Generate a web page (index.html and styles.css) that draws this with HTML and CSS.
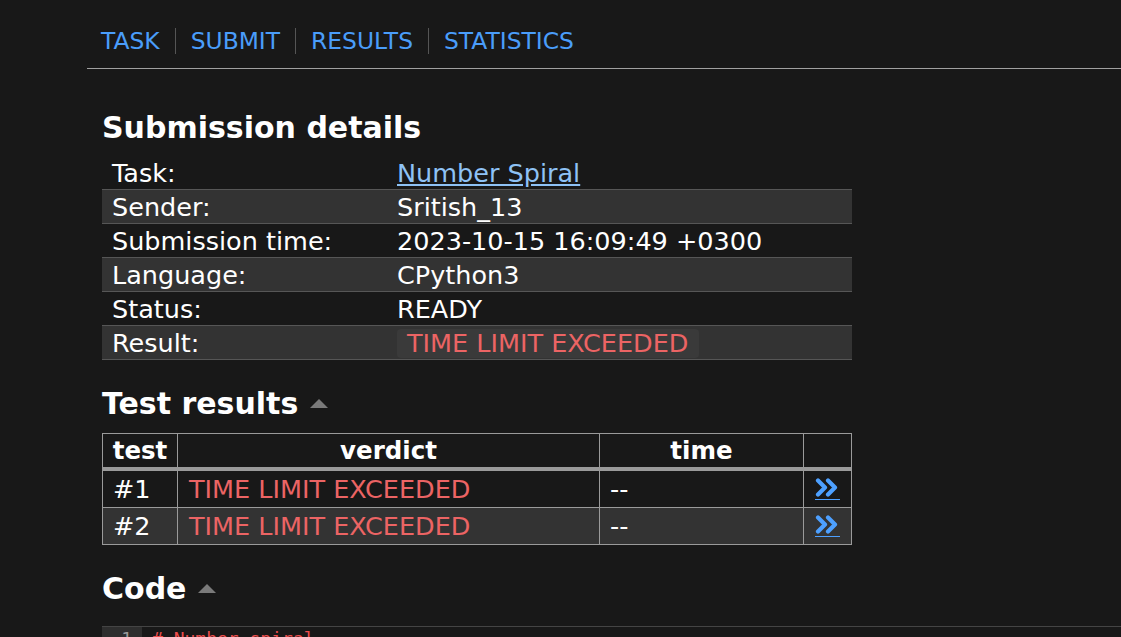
FILE: index.html
```html
<!DOCTYPE html>
<html>
<head>
<meta charset="utf-8">
<link rel="stylesheet" href="styles.css">
</head>
<body>
<div class="page">
  <nav class="nav">
    <a href="#">TASK</a>
    <a href="#">SUBMIT</a>
    <a href="#">RESULTS</a>
    <a href="#">STATISTICS</a>
  </nav>
  <div class="content">
    <h2 class="h-first">Submission details</h2>
    <table class="details">
      <tr><td class="k">Task:</td><td><a class="task-link" href="#">Number Spiral</a></td></tr>
      <tr><td class="k">Sender:</td><td>Sritish_13</td></tr>
      <tr><td class="k">Submission time:</td><td>2023-10-15 16:09:49 +0300</td></tr>
      <tr><td class="k">Language:</td><td>CPython3</td></tr>
      <tr><td class="k">Status:</td><td>READY</td></tr>
      <tr><td class="k">Result:</td><td><span class="badge">TIME LIMIT EXCEEDED</span></td></tr>
    </table>

    <h2 class="h-sec h-tests">Test results <span class="tri"></span></h2>
    <table class="tests">
      <thead>
        <tr><th class="c1">test</th><th class="c2">verdict</th><th class="c3">time</th><th class="c4"></th></tr>
      </thead>
      <tbody>
        <tr><td>#1</td><td class="red">TIME LIMIT EXCEEDED</td><td>--</td><td class="go"><a href="#"><svg width="26" height="19" viewBox="0 0 26 19"><path d="M3 2.5 L10 9.5 L3 16.5 M13 2.5 L20 9.5 L13 16.5" fill="none" stroke="#4da0ff" stroke-width="4.2" stroke-linecap="round" stroke-linejoin="round"/></svg></a></td></tr>
        <tr><td>#2</td><td class="red">TIME LIMIT EXCEEDED</td><td>--</td><td class="go"><a href="#"><svg width="26" height="19" viewBox="0 0 26 19"><path d="M3 2.5 L10 9.5 L3 16.5 M13 2.5 L20 9.5 L13 16.5" fill="none" stroke="#4da0ff" stroke-width="4.2" stroke-linecap="round" stroke-linejoin="round"/></svg></a></td></tr>
      </tbody>
    </table>

    <h2 class="h-sec h-code">Code <span class="tri"></span></h2>
    <div class="code">
      <div class="ln">1</div>
      <div class="src"># Number spiral</div>
    </div>
  </div>
</div>
</body>
</html>
```

FILE: styles.css
```css
html, body {
  margin: 0;
  padding: 0;
  background: #181818;
  color: #ffffff;
  font-family: "DejaVu Sans", Verdana, sans-serif;
  overflow: hidden;
}
.page {
  padding-left: 87px;
}
.nav {
  display: flex;
  align-items: flex-start;
  height: 40px;
  padding-top: 28px;
  border-bottom: 1px solid #a0a0a0;
  padding-left: 14px;
  box-sizing: content-box;
}
.nav a {
  color: #4a9dfa;
  text-decoration: none;
  font-size: 23.4px;
  line-height: 26px;
  padding: 0 15px 0 15px;
  border-left: 1px solid #555;
}
.nav a:first-child {
  border-left: none;
  padding-left: 0;
  padding-right: 15px;
}
.content {
  padding-left: 15px;
  width: 750px;
}
h2 {
  font-size: 30px;
  font-weight: bold;
  margin: 0;
  line-height: 36px;
}
.h-first {
  margin-top: 41px;
  margin-bottom: 10px;
}
.h-sec {
  margin-bottom: 11px;
  display: flex;
  align-items: center;
}
.h-tests {
  margin-top: 26px;
}
.tri {
  display: inline-block;
  width: 0;
  height: 0;
  border-left: 9px solid transparent;
  border-right: 9px solid transparent;
  border-bottom: 9px solid #7a7a7a;
  margin-left: 12px;
  margin-top: -2px;
}
.details {
  width: 750px;
  border-collapse: collapse;
  font-size: 25.5px;
}
.details td {
  padding: 2px 10px 1px;
  line-height: 30px;
  height: 30px;
  border-bottom: 1px solid #565656;
  white-space: nowrap;
}
.details td.k {
  width: 265px;
}
.details tr:nth-child(even) td {
  background: #333333;
}
.task-link {
  color: #8ec2f5;
  text-decoration: underline;
}
.badge {
  display: inline-block;
  background: #3a3a3a;
  color: #ec6464;
  border-radius: 4px;
  padding: 0 11px 0 10px;
  line-height: 29px;
  margin-top: 1px;
}
.tests {
  width: 750px;
  border-collapse: collapse;
  font-size: 25.5px;
}
.tests th, .tests td {
  border: 1px solid #9a9a9a;
  white-space: nowrap;
}
.tests th {
  font-size: 24.5px;
  font-weight: bold;
  text-align: center;
  height: 33px;
  padding: 0;
  line-height: 30px;
  border-bottom: 4px solid #9a9a9a;
}
.tests .c1 { width: 74px; }
.tests .c2 { width: 421px; }
.tests .c3 { width: 203px; }
.tests td {
  padding: 0 10px;
  height: 36px;
  line-height: 30px;
}
.tests tbody tr:nth-child(2) td {
  background: #333333;
}
.tests td.red {
  color: #ec6464;
  padding-left: 11px;
}
.tests td.go {
  padding: 0 0 0 11px;
}
.go a {
  display: inline-block;
  width: 25px;
  height: 22px;
  border-bottom: 1px solid #4da0ff;
  margin-top: 4px;
}
.go svg {
  display: block;
  margin-top: 1px;
}
.h-code {
  margin-top: 26px;
}
.code {
  display: flex;
  margin-top: 19px;
  border-top: 1px solid #444;
  width: 1100px;
  font-family: "DejaVu Sans Mono", monospace;
  font-size: 18px;
}
.ln {
  width: 40px;
  background: #2e2e2e;
  color: #999;
  text-align: right;
  padding-right: 10px;
  box-sizing: border-box;
  line-height: 24px;
}
.src {
  color: #ec4d4d;
  padding-left: 10px;
  line-height: 24px;
}
```
